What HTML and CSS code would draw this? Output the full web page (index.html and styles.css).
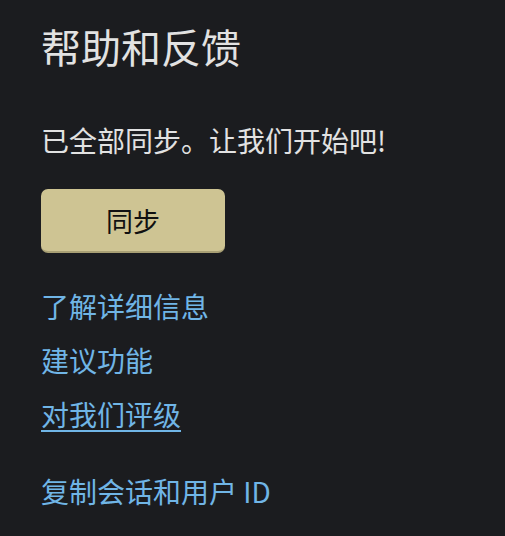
FILE: index.html
```html
<!DOCTYPE html>
<html lang="zh-CN">
  <head>
    <meta charset="UTF-8" />
    <meta name="viewport" content="width=device-width, initial-scale=1.0" />
    <title>帮助和反馈</title>
    <link rel="stylesheet" href="styles.css">
  </head>
  <body>
    <div class="panel">
      <h1 class="title">帮助和反馈</h1>
      <p class="status">已全部同步。让我们开始吧!</p>
      <button type="button" class="sync-button">同步</button>
      <div class="links">
        <a href="#" class="link">了解详细信息</a>
        <a href="#" class="link">建议功能</a>
        <a href="#" class="link underline">对我们评级</a>
        <a href="#" class="link copy">复制会话和用户 ID</a>
      </div>
    </div>
  </body>
</html>
```

FILE: styles.css
```css
/* Basic styling */
body {
  font-family: "Noto Sans CJK SC", "Noto Sans", sans-serif;
  background-color: #1b1c1f;
  color: #e2e2e2;
  margin: 0;
  padding: 0;
}
.panel {
  padding: 20px 41px 0;
}
.title {
  font-size: 40px;
  font-weight: normal;
  line-height: 52px;
  margin: 0;
}
.status {
  font-size: 28px;
  line-height: 40px;
  margin: 48px 0 0;
}
.sync-button {
  display: block;
  width: 184px;
  height: 64px;
  margin-top: 29px;
  border: none;
  border-bottom: 2px solid #a89f74;
  border-radius: 7px;
  background-color: #cec493;
  color: #111;
  font-family: inherit;
  font-size: 27px;
  cursor: pointer;
}
.links {
  display: flex;
  flex-direction: column;
  align-items: flex-start;
  margin-top: 33px;
}
.link {
  font-size: 28px;
  line-height: 40px;
  color: #70b5e6;
  text-decoration: none;
  margin-bottom: 14px;
}
.link.underline {
  text-decoration: underline;
  text-underline-offset: 4px;
  text-decoration-thickness: 2px;
}
.link.copy {
  margin-top: 23px;
}
```
